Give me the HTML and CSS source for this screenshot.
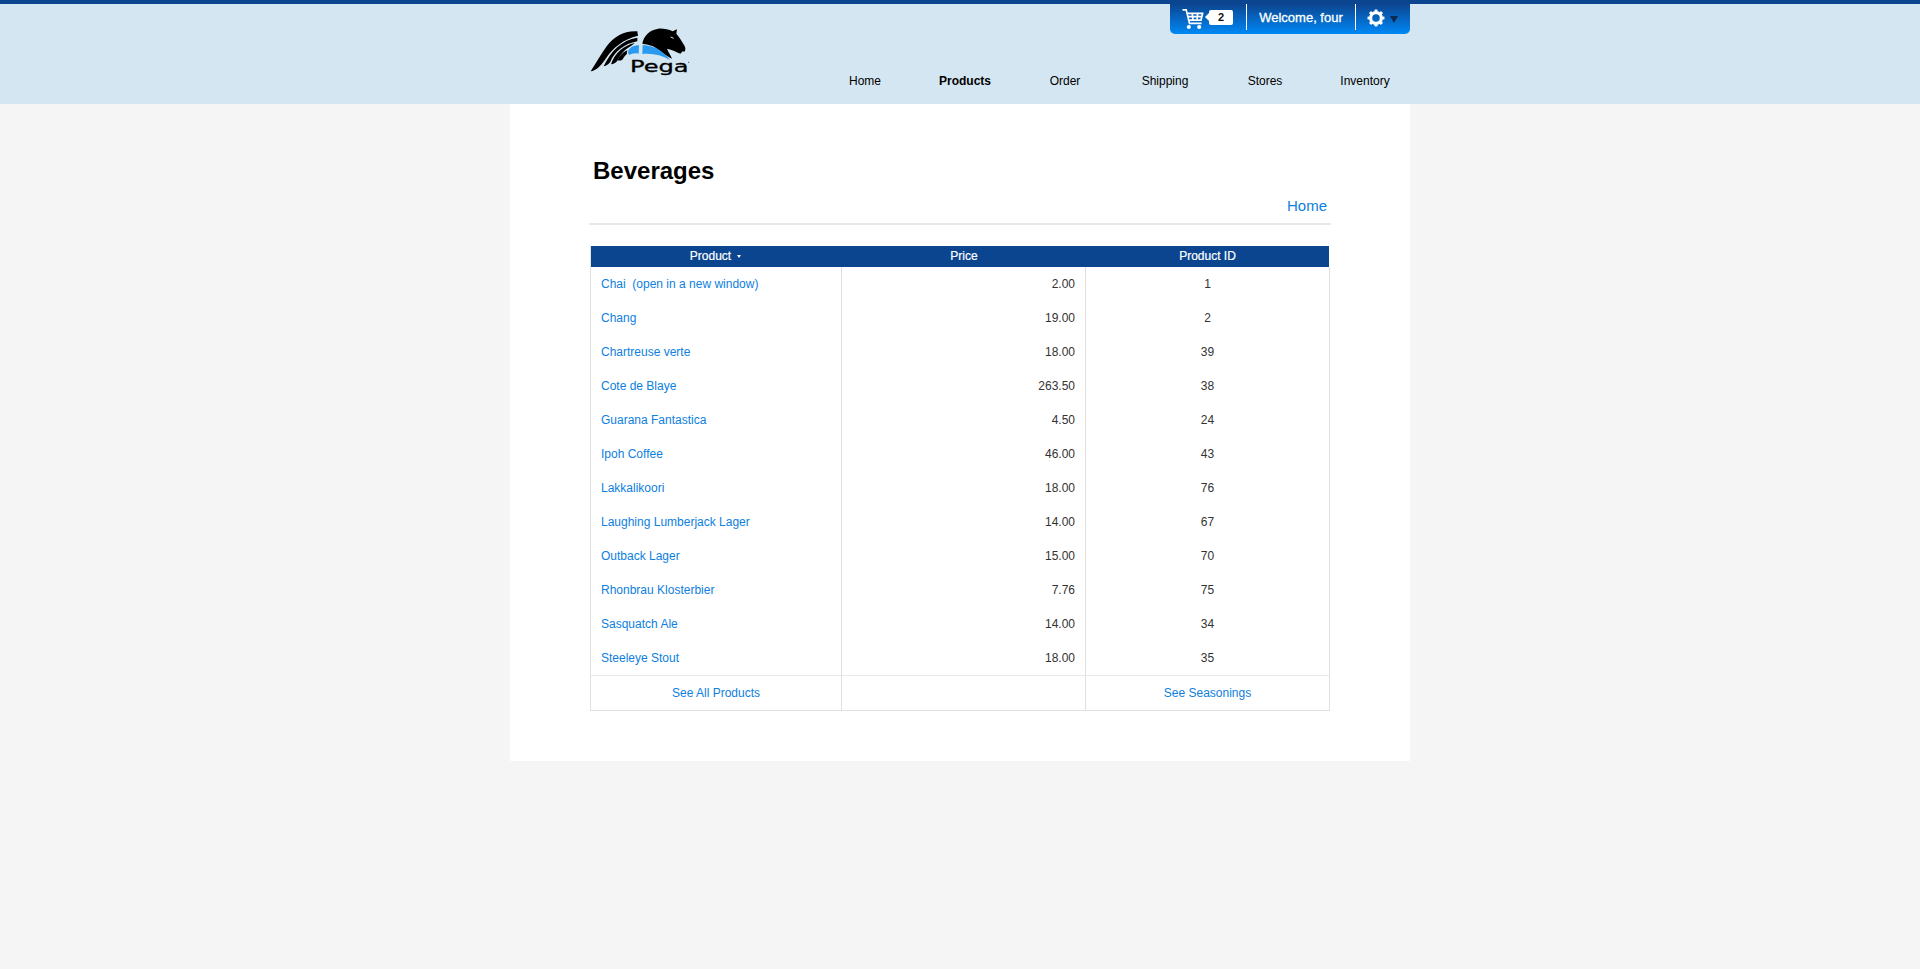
FILE: index.html
```html
<!DOCTYPE html>
<html lang="en">
<head>
<meta charset="utf-8">
<title>Beverages</title>
<link rel="stylesheet" href="styles.css">
</head>
<body>
<header class="site-header">
  <div class="header-inner">
    <svg class="logo" viewBox="30 24 300 150" width="100" height="50" role="img" aria-label="Pega">
      <path d="M32 154C50 127 64 101 80 79C102 49 135 31 172 34L174 47C131 57 99 82 75 119C61 139 49 151 32 154Z"/>
      <path d="M71 139C92 94 125 60 172 53V64C132 71 103 96 91 125C86 133 79 137 71 139Z"/>
      <path d="M93 133C104 99 132 76 165 69L154 77C135 87 118 106 112 122C107 129 101 132 93 133Z"/>
      <path d="M112 121C117 109 128 97 142 91L140 103C134 107 130 116 126 120C121 122 116 122 112 121Z"/>
      <path d="M187 71C190 50 208 29 235 26C249 25 265 28 278 34L291 28L289 41C296 49 304 61 310 72C317 80 318 91 313 95L308 94L301 101C289 97 277 88 261 86C264 95 272 104 276 116C256 108 240 91 219 79C209 74 199 73 187 71Z"/>
      <path class="logo-blue" d="M144 99C145 83 160 76 177 76L176 101C165 98 155 101 148 105Z"/>
      <path class="logo-blue" d="M188 75C222 77 248 91 270 120C244 105 218 99 187 102Z"/>
      <path class="logo-line" d="M272 51L281 55"/>
      <text x="150" y="156" textLength="176" lengthAdjust="spacingAndGlyphs">Pega</text>
      <circle cx="326" cy="127" r="1.5"/>
    </svg>
    <nav class="main-nav">
      <a>Home</a><a class="current">Products</a><a>Order</a><a>Shipping</a><a>Stores</a><a>Inventory</a>
    </nav>
    <div class="user-bar">
      <div class="cart">
        <svg viewBox="0 0 23 22" width="23" height="22">
          <path class="cart-line" d="M0.5 1.8H4.2L7.5 15.4H19.6M5 5.3H20.6L19 12.2H7M6 8.7H20M10.2 5.3L11 12.2M15.7 5.3L15 12.2"/>
          <circle cx="6.8" cy="19" r="2.1"/><circle cx="17.2" cy="19" r="2.1"/>
        </svg>
        <span class="count">2</span>
      </div>
      <div class="welcome">Welcome, four</div>
      <div class="settings">
        <svg viewBox="-9 -9 18 18" width="18" height="18">
          <circle class="gear-ring" r="5.4"/>
          <circle class="gear-teeth" r="7.3" pathLength="80"/>
        </svg>
        <svg class="caret" viewBox="0 0 8 7" width="8" height="7"><path d="M0 0H8L4 7Z"/></svg>
      </div>
    </div>
  </div>
</header>
<main class="page">
  <h1>Beverages</h1>
  <div class="crumb"><a>Home</a></div>
  <table class="products">
    <colgroup><col class="c1"><col class="c2"><col class="c3"></colgroup>
    <thead><tr><th><span class="sorted">Product<i class="sort"></i></span></th><th>Price</th><th>Product ID</th></tr></thead>
    <tbody>
      <tr><td><a>Chai&nbsp; (open in a new window)</a></td><td>2.00</td><td>1</td></tr>
      <tr><td><a>Chang</a></td><td>19.00</td><td>2</td></tr>
      <tr><td><a>Chartreuse verte</a></td><td>18.00</td><td>39</td></tr>
      <tr><td><a>Cote de Blaye</a></td><td>263.50</td><td>38</td></tr>
      <tr><td><a>Guarana Fantastica</a></td><td>4.50</td><td>24</td></tr>
      <tr><td><a>Ipoh Coffee</a></td><td>46.00</td><td>43</td></tr>
      <tr><td><a>Lakkalikoori</a></td><td>18.00</td><td>76</td></tr>
      <tr><td><a>Laughing Lumberjack Lager</a></td><td>14.00</td><td>67</td></tr>
      <tr><td><a>Outback Lager</a></td><td>15.00</td><td>70</td></tr>
      <tr><td><a>Rhonbrau Klosterbier</a></td><td>7.76</td><td>75</td></tr>
      <tr><td><a>Sasquatch Ale</a></td><td>14.00</td><td>34</td></tr>
      <tr><td><a>Steeleye Stout</a></td><td>18.00</td><td>35</td></tr>
    </tbody>
    <tfoot><tr><td><a>See All Products</a></td><td></td><td><a>See Seasonings</a></td></tr></tfoot>
  </table>
</main>
</body>
</html>
```
FILE: styles.css
```css
* { box-sizing: border-box; }
body {
  margin: 0;
  background: #f5f5f5;
  color: #333;
  font: 12px/14px "Liberation Sans", Arial, sans-serif;
}
a { color: #0d80e0; text-decoration: none; }

.site-header {
  height: 104px;
  background: #d4e6f2;
  border-top: 4px solid #0b4590;
}
.header-inner {
  position: relative;
  display: flex;
  width: 900px;
  margin: 0 auto;
  padding-left: 80px;
}
.logo { margin-top: 24px; flex: none; }
.logo text { font: 50px "DejaVu Sans", sans-serif; stroke: #000; stroke-width: 1; }
.logo-blue { fill: #2a9af0; }
.logo-line { fill: none; stroke: #d4e6f2; stroke-width: 3; }

.main-nav { display: flex; margin: 70px -5px 0 125px; }
.main-nav a { width: 100px; text-align: center; color: #000; }
.main-nav .current { font-weight: bold; }

.user-bar {
  position: absolute;
  top: 0;
  right: 0;
  display: flex;
  width: 240px;
  height: 30px;
  color: #fff;
  background: linear-gradient(#0b4590, #0088f5);
  border-radius: 0 0 5px 5px;
}
.user-bar svg { fill: #fff; flex: none; }
.cart { display: flex; width: 76px; padding: 4px 0 0 12px; }
.cart-line { fill: none; stroke: #fff; stroke-width: 1.7; }
.count {
  position: relative;
  width: 24px;
  height: 15px;
  margin: 2px 0 0 4px;
  border-radius: 2px;
  background: #fff;
  color: #111;
  font: bold 11px/15px "Liberation Sans", Arial, sans-serif;
  text-align: center;
}
.count::before {
  content: "";
  position: absolute;
  left: -4px;
  top: 3px;
  border: solid transparent;
  border-width: 4.5px 4px 4.5px 0;
  border-right-color: #fff;
}
.welcome {
  width: 110px;
  height: 26px;
  border: solid #fff;
  border-width: 0 1px;
  font-size: 13px;
  line-height: 27px;
  text-align: center;
  -webkit-text-stroke: 0.3px #fff;
}
.settings { display: flex; padding: 5px 0 0 11px; }
.gear-ring { fill: none; stroke: #fff; stroke-width: 3.2; }
.gear-teeth { fill: none; stroke: #fff; stroke-width: 2.4; stroke-dasharray: 5 5; stroke-dashoffset: 2.5; }
.user-bar .caret { margin: 7px 0 0 5px; fill: #0b2a50; }

.page {
  width: 900px;
  height: 657px;
  margin: 0 auto;
  padding: 53px 79px 0;
  background: #fff;
}
h1 { margin: 0 0 0 4px; font-size: 24px; line-height: 28px; color: #000; }
.crumb {
  height: 40px;
  padding: 12px 4px 0 0;
  border-bottom: 2px solid #e8e8e8;
  font-size: 15px;
  line-height: 17px;
  text-align: right;
}

.products {
  width: 740px;
  margin: 21px 0 0 1px;
  border-spacing: 0;
  table-layout: fixed;
  border-left: 1px solid #e0e0e0;
}
.c1 { width: 251px; }
.c2, .c3 { width: 244px; }
.products th {
  height: 21px;
  padding: 0 0 1px;
  background: #0b4590;
  color: #fff;
  font-weight: normal;
  -webkit-text-stroke: 0.2px #fff;
}
.products th:last-child { border-right: 1px solid #fff; }
.sorted { display: inline-flex; align-items: center; vertical-align: top; }
.sort {
  margin: 0 2px 0 6px;
  border: solid transparent;
  border-width: 3px 2.5px 0;
  border-top-color: #fff;
}
.products td {
  height: 34px;
  padding: 0 10px;
  border-right: 1px solid #e0e0e0;
}
.products td:nth-child(2) { text-align: right; }
.products td:nth-child(3) { text-align: center; }
.products tfoot td {
  height: 36px;
  border-top: 1px solid #e8e8e8;
  border-bottom: 1px solid #e0e0e0;
  text-align: center;
}
```
